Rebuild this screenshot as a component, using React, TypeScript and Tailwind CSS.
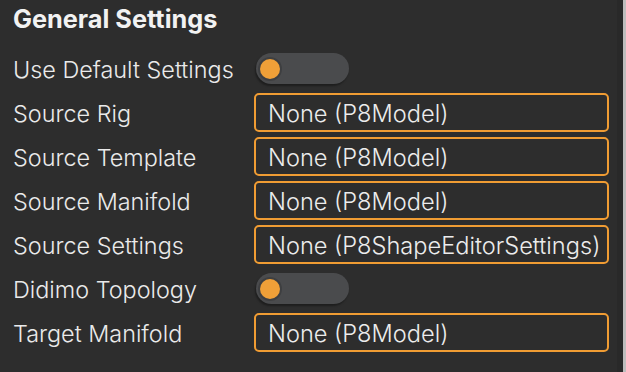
import React from 'react';

type Row =
  | { label: string; kind: 'toggle' }
  | { label: string; kind: 'field'; value: string };

const rows: Row[] = [
  { label: 'Use Default Settings', kind: 'toggle' },
  { label: 'Source Rig', kind: 'field', value: 'None (P8Model)' },
  { label: 'Source Template', kind: 'field', value: 'None (P8Model)' },
  { label: 'Source Manifold', kind: 'field', value: 'None (P8Model)' },
  { label: 'Source Settings', kind: 'field', value: 'None (P8ShapeEditorSettings)' },
  { label: 'Didimo Topology', kind: 'toggle' },
  { label: 'Target Manifold', kind: 'field', value: 'None (P8Model)' },
];

function Toggle() {
  return (
    <div className="ml-[2px] w-[93px] h-[31px] rounded-full bg-[#4a4b4d] shadow-[-1px_2px_2px_rgba(0,0,0,0.35)] flex items-center pl-[2px]">
      <div className="w-[24px] h-[24px] rounded-full bg-[#3e3f41] flex items-center justify-center">
        <div className="w-[20px] h-[20px] rounded-full bg-[#f0a038]" />
      </div>
    </div>
  );
}

function Field({ value }: { value: string }) {
  return (
    <div className="w-[355px] h-[39px] rounded-[5px] border-2 border-[#f09c33] flex items-center pl-[12px] pt-[3px] text-[23.6px] font-light text-[#ececec] whitespace-nowrap">
      {value}
    </div>
  );
}

export default function App() {
  return (
    <div
      className="w-[626px] h-[372px] flex bg-[#2d2d2d] overflow-hidden"
      style={{ fontFamily: 'Inter, "Noto Sans", sans-serif' }}
    >
      <div className="flex-1 pl-[13px]">
        {/* Header */}
        <div className="h-[49px] pt-[4px]">
          <h1 className="text-[25.3px] leading-[30px] font-bold text-[#f2f2f2]">General Settings</h1>
        </div>

        <div className="flex flex-col gap-[5px]">
          {rows.map((r) => (
            <div key={r.label} className="h-[39px] flex items-center">
              <div className="w-[241px] pt-[2px] text-[23.4px] font-light text-[#eaeaea] whitespace-nowrap">{r.label}</div>
              {r.kind === 'toggle' ? <Toggle /> : <Field value={r.value} />}
            </div>
          ))}
        </div>
      </div>
      <div className="w-[6px] bg-[#292929]" />
      <div className="w-[3px] bg-[#bdbdbd]" />
    </div>
  );
}
